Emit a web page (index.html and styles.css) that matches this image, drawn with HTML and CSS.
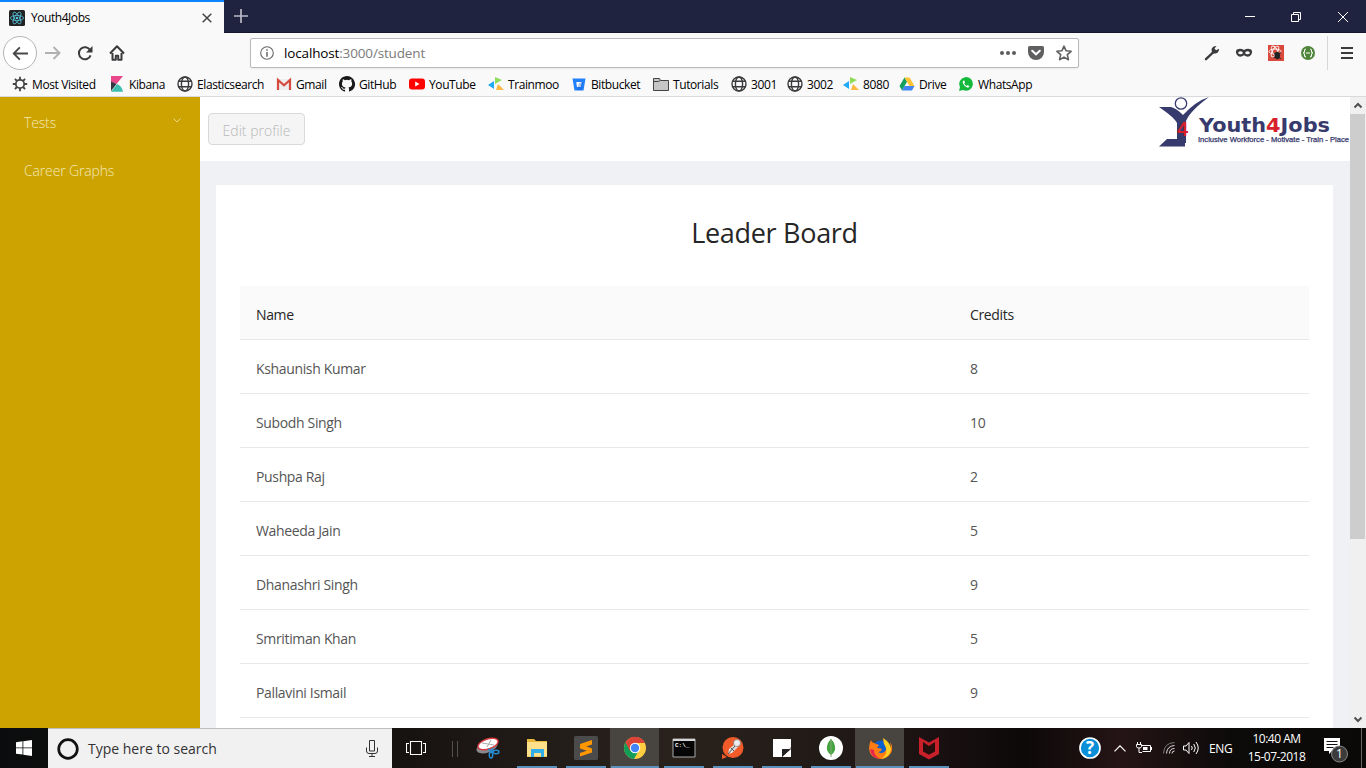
FILE: index.html
```html
<!DOCTYPE html>
<html lang="en">
<head>
<meta charset="utf-8">
<title>Youth4Jobs</title>
<link rel="stylesheet" href="styles.css">
</head>
<body>
<svg class="defs" aria-hidden="true">
  <symbol id="globe" viewBox="0 0 16 16"><g fill="none" stroke="#3b3b3d" stroke-width="1.4"><circle cx="8" cy="8" r="7"/><ellipse cx="8" cy="8" rx="3.6" ry="7"/><path d="M1.5 5.3h13M1.5 10.7h13"/></g></symbol>
  <symbol id="trainmoo" viewBox="0 0 16 16"><path d="M7 1l7 3-7 4z" fill="#8fdc5a"/><path d="M6 5v8L0 9z" fill="#22aaf5"/><path d="M8 14l2-6 6 6z" fill="#fdb942"/></symbol>
</svg>

<header class="browser">
  <div class="tabbar">
    <div class="tab">
      <svg class="i16" viewBox="0 0 16 16"><rect width="16" height="16" rx="1.5" fill="#222"/><g fill="none" stroke="#58c4dc" stroke-width=".8"><ellipse cx="8" cy="8" rx="6.6" ry="2.6"/><ellipse cx="8" cy="8" rx="6.6" ry="2.6" transform="rotate(60 8 8)"/><ellipse cx="8" cy="8" rx="6.6" ry="2.6" transform="rotate(120 8 8)"/></g><circle cx="8" cy="8" r="1.3" fill="#58c4dc"/></svg>
      <span class="tab-title">Youth4Jobs</span>
      <svg class="tab-close" viewBox="0 0 10 10"><path d="M.7.7l8.6 8.6M9.3.7L.7 9.3" stroke="#444" stroke-width="1.5"/></svg>
    </div>
    <svg class="newtab" viewBox="0 0 14 14"><path d="M7 0v14M0 7h14" stroke="#b9bac5" stroke-width="1.7"/></svg>
    <div class="winbtns">
      <svg viewBox="0 0 46 33"><path d="M17 16.5h10" stroke="#fff"/></svg>
      <svg viewBox="0 0 46 33"><path d="M17.5 14.500h7v7h-7zM19.500 14.500v-2h7v7h-2" fill="none" stroke="#fff"/></svg>
      <svg viewBox="0 0 46 33"><path d="M18 12l10 10M28 12L18 22" stroke="#fff"/></svg>
    </div>
  </div>

  <div class="navbar">
    <div class="back"><svg viewBox="0 0 18 16"><path d="M17 8H2M8.300 1.500L1.800 8l6.500 6.500" fill="none" stroke="#48484a" stroke-width="2"/></svg></div>
    <svg class="forward" viewBox="0 0 16 14"><path d="M0 7h14M8.500 1l6 6-6 6" fill="none" stroke="#b1b1b3" stroke-width="1.9"/></svg>
    <svg class="reload" viewBox="0 0 16 16"><path d="M13.600 10.300a6 6 0 1 1-.4-5" fill="none" stroke="#3b3b3d" stroke-width="2"/><path d="M15.500 1v6.500H9z" fill="#3b3b3d"/></svg>
    <svg class="home" viewBox="0 0 16 16"><path d="M1 8.500L8 1.300l7 7.200M3.500 8v6.800h3.300v-4h2.400v4h3.300V8" fill="none" stroke="#3b3b3d" stroke-width="2" stroke-linejoin="round"/></svg>
    <div class="urlbar">
      <svg class="info" viewBox="0 0 14 14"><circle cx="7" cy="7" r="6.300" fill="none" stroke="#666" stroke-width="1.100"/><path d="M7 6v4.700M7 3.200v1.600" stroke="#666" stroke-width="1.500"/></svg>
      <span class="url">localhost<i>:3000/student</i></span>
      <svg class="dots" viewBox="0 0 16 4"><g fill="#5c5c5e"><circle cx="2" cy="2" r="2"/><circle cx="8" cy="2" r="2"/><circle cx="14" cy="2" r="2"/></g></svg>
      <svg class="pocket" viewBox="0 0 16 14"><path d="M1.500 0h13Q16 0 16 1.500V6A8 8 0 0 1 0 6V1.500Q0 0 1.500 0z" fill="#606062"/><path d="M4.200 4.800L8 8.300l3.800-3.500" fill="none" stroke="#fff" stroke-width="2" stroke-linecap="round"/></svg>
      <svg class="star" viewBox="0 0 16 16"><path d="M8 1.200l2.100 4.600 5 .5-3.800 3.400 1.100 5L8 12.100l-4.400 2.600 1.100-5L.9 6.300l5-.5z" fill="none" stroke="#606062" stroke-width="1.600" stroke-linejoin="round"/></svg>
    </div>
    <div class="addons">
      <svg viewBox="0 0 16 16"><path d="M2 14.200L9 7.500" stroke="#3b3b3d" stroke-width="2.400" stroke-linecap="round"/><path d="M8 8.500L7.500 4Q9 .8 12.500 1L10.500 3.500l1.500 1.800L15 3.800Q15 8 11.500 8.500z" fill="#3b3b3d"/></svg>
      <svg viewBox="0 0 16 16"><path d="M1 4.500Q4.500 3 8 5q3.500-2 7-.5Q17 6 15.300 9.500 12.500 13.500 8 10.300 3.500 13.500.7 9.500-1 6 1 4.500z" fill="#3b3b3d"/><ellipse cx="4.500" cy="7.800" rx="2.300" ry="1.500" fill="#f9f9fa"/><ellipse cx="11.500" cy="7.800" rx="2.300" ry="1.500" fill="#f9f9fa"/></svg>
      <svg viewBox="0 0 16 16"><rect width="16" height="16" fill="#d94a3d"/><g fill="none" stroke="#fff" stroke-width=".9"><ellipse cx="7" cy="6.500" rx="6" ry="2.500"/><ellipse cx="7" cy="6.500" rx="6" ry="2.500" transform="rotate(60 7 6.500)"/><ellipse cx="7" cy="6.500" rx="6" ry="2.500" transform="rotate(120 7 6.500)"/></g><ellipse cx="9.300" cy="10.500" rx="2.800" ry="3.700" fill="#222"/><path d="M5.500 8l7.500 6M5.500 13L13 7.500" stroke="#222"/></svg>
      <svg viewBox="0 0 16 16"><circle cx="8" cy="8" r="7" fill="#4e8539"/><path d="M6 4Q4.500 4 4.500 6T3 8q1.500 0 1.500 2T6 12M10 4q1.500 0 1.500 2T13 8q-1.500 0-1.500 2T10 12M6 8h4" fill="none" stroke="#fff" stroke-width="1.100"/></svg>
    </div>
    <div class="menu"><svg viewBox="0 0 12 12"><path d="M0 1h12M0 6h12M0 11h12" stroke="#3b3b3d" stroke-width="2"/></svg></div>
  </div>

  <nav class="bookmarks">
    <a><svg viewBox="0 0 16 16"><circle cx="8" cy="8" r="4.200" fill="none" stroke="#444" stroke-width="1.800"/><path d="M8 .8v3M8 12.200v3M.8 8h3M12.200 8h3M2.900 2.900L5 5M11 11l2.100 2.100M2.900 13.100L5 11M11 5l2.100-2.100" stroke="#444" stroke-width="1.800"/></svg>Most Visited</a>
    <a><svg viewBox="0 0 16 16"><path d="M2 0h12L7.500 8 2 6z" fill="#e8478b"/><path d="M2 5.500L7.500 8 2 15z" fill="#343741"/><path d="M2 15.700L8 8q5 2 6 7.700z" fill="#3ebeb0"/></svg>Kibana</a>
    <a><svg><use href="#globe"/></svg>Elasticsearch</a>
    <a><svg viewBox="0 0 16 16"><path d="M1 3h14v11H1z" fill="#eee"/><path d="M2 14V4l6 5.300L14 4v10" fill="none" stroke="#d54c3f" stroke-width="2.200"/></svg>Gmail</a>
    <a><svg viewBox="0 0 16 16"><path fill="#191717" d="M8 0C3.580 0 0 3.580 0 8c0 3.540 2.290 6.530 5.470 7.590.4.070.55-.17.55-.38v-1.490c-2.010.37-2.530-.49-2.690-.94-.09-.23-.48-.94-.82-1.130-.28-.15-.68-.52-.01-.53.63-.01 1.080.58 1.230.82.72 1.210 1.870.87 2.330.66.07-.52.28-.87.51-1.070-1.780-.2-3.640-.89-3.640-3.950 0-.87.31-1.590.82-2.150-.08-.2-.36-1.020.08-2.120 0 0 .67-.21 2.200.82a7.500 7.500 0 0 1 4 0c1.530-1.040 2.200-.82 2.200-.82.44 1.100.16 1.920.08 2.120.51.56.82 1.270.82 2.150 0 3.070-1.870 3.750-3.650 3.950.29.25.54.73.54 1.480v2.200c0 .21.150.46.55.38A8 8 0 0 0 8 0z"/></svg>GitHub</a>
    <a><svg viewBox="0 0 16 16"><rect y="2.500" width="16" height="11" rx="3" fill="#f00"/><path d="M6.200 5.500v5l4.300-2.500z" fill="#fff"/></svg>YouTube</a>
    <a><svg><use href="#trainmoo"/></svg>Trainmoo</a>
    <a><svg viewBox="0 0 16 16"><path d="M1.500 2.500h13l-2 12h-9z" fill="#2380fb"/><path d="M5.300 6h5.400l-.8 5H6z" fill="#fff"/><path d="M8 7l4-1-1.500 8H6z" fill="#1159c9" opacity=".35"/></svg>Bitbucket</a>
    <a><svg viewBox="0 0 16 16"><path d="M.5 14.500v-12h6l1 2h8v10z" fill="#c6c6c6" stroke="#444"/><path d="M.5 5.500h5l1.500-1" fill="none" stroke="#444"/></svg>Tutorials</a>
    <a><svg><use href="#globe"/></svg>3001</a>
    <a><svg><use href="#globe"/></svg>3002</a>
    <a><svg><use href="#trainmoo"/></svg>8080</a>
    <a><svg viewBox="0 0 16 16"><path d="M5.500 1.500L.5 10l2.500 4.500 5-8.700z" fill="#11a05d"/><path d="M5.500 1.500h5l5 8.500h-5z" fill="#fbc334"/><path d="M5.500 10h10L13 14.500H3z" fill="#4285f4"/></svg>Drive</a>
    <a><svg viewBox="0 0 16 16"><path d="M1 15l1-4A6.800 6.800 0 1 1 5 14z" fill="#12b93b"/><path d="M5.500 4.500Q4 5.500 5 7.500q1.500 3 4 4 2 .5 2.500-1.300L9.700 9l-1 1Q7 9.200 6.200 7.500l.8-1-.7-2z" fill="#fff"/></svg>WhatsApp</a>
  </nav>
</header>

<div class="viewport">
  <aside class="sidebar">
    <div class="side-item">Tests<svg viewBox="0 0 8 5"><path d="M.5.500L4 4l3.500-3.500" fill="none" stroke="#ecd98d"/></svg></div>
    <div class="side-item">Career Graphs</div>
  </aside>
  <main class="main">
    <div class="topbar">
      <button class="edit" disabled>Edit profile</button>
      <svg class="logo" viewBox="0 0 191 51">
        <path d="M0 10h12q5 1 12 8Q37 4 50 0 31 14 27 24v22H26v3.500H0L8 42h10V26Q16 21 0 10z" fill="#373a6d"/>
        <circle cx="22" cy="6.500" r="5.700" fill="#fff" stroke="#373a6d" stroke-width="1.300"/>
        <text class="logo-four" x="18" y="39">4</text>
        <text class="logo-name" x="40" y="35" textLength="131" lengthAdjust="spacingAndGlyphs">Youth<tspan fill="#d7202c">4</tspan>Jobs</text>
        <text class="logo-tag" x="39" y="45" textLength="151" lengthAdjust="spacingAndGlyphs">Inclusive Workforce - Motivate - Train - Place</text>
      </svg>
    </div>
    <section class="card">
      <h1>Leader Board</h1>
      <table>
        <thead><tr><th>Name</th><th>Credits</th></tr></thead>
        <tbody>
          <tr><td>Kshaunish Kumar</td><td>8</td></tr>
          <tr><td>Subodh Singh</td><td>10</td></tr>
          <tr><td>Pushpa Raj</td><td>2</td></tr>
          <tr><td>Waheeda Jain</td><td>5</td></tr>
          <tr><td>Dhanashri Singh</td><td>9</td></tr>
          <tr><td>Smritiman Khan</td><td>5</td></tr>
          <tr><td>Pallavini Ismail</td><td>9</td></tr>
        </tbody>
      </table>
    </section>
  </main>
  <div class="scrollbar">
    <svg viewBox="0 0 16 17"><path d="M4.500 10.500L8 7l3.500 3.500" fill="none" stroke="#505050" stroke-width="2"/></svg>
    <div class="thumb"></div>
    <svg class="down" viewBox="0 0 16 17"><path d="M4.500 6.500L8 10l3.500-3.500" fill="none" stroke="#505050" stroke-width="2"/></svg>
  </div>
</div>

<footer class="taskbar">
  <div class="start"><svg viewBox="0 0 16 16"><path d="M0 2.200l6.500-.9v6.200H0zM7.300 1.200L16 0v7.500H7.300zM0 8.300h6.500v6.200L0 13.700zM7.300 8.300H16V16l-8.700-1.200z" fill="#fff"/></svg></div>
  <div class="search">
    <svg class="cortana" viewBox="0 0 22 22"><circle cx="11" cy="11" r="9.300" fill="none" stroke="#111" stroke-width="2.700"/></svg>
    <span>Type here to search</span>
    <svg class="mic" viewBox="0 0 12 17"><path d="M3.500.5h5v10.500h-5zM.5 7.500V11q0 2.500 2.500 2.500h6q2.500 0 2.500-2.500V7.500M6 13.500v3M3 16.500h6" fill="none" stroke="#333"/></svg>
  </div>
  <div class="taskview"><svg viewBox="0 0 20 14"><path d="M4.500.5h11v13h-11zM3 2.500H.5v9H3M17 2.500h2.500v9H17" fill="none" stroke="#fff" stroke-width="1.100"/></svg></div>
  <div class="apps">
    <div class="app"><svg viewBox="0 0 24 24"><ellipse cx="11" cy="11" rx="11" ry="5.500" transform="rotate(-20 11 11)" fill="#87898c"/><ellipse cx="12" cy="8" rx="10.500" ry="5" transform="rotate(-18 12 8)" fill="#fff" stroke="#d73a3f" stroke-width="1.400"/><path d="M6 7l12 2M11 11l4-7" stroke="#aaa"/><path d="M12 13l6 3M17 12l-3 5" stroke="#268bd0" stroke-width="1.500"/><g fill="none" stroke="#268bd0" stroke-width="1.500"><ellipse cx="15" cy="19" rx="1.700" ry="3"/><ellipse cx="20" cy="16" rx="3" ry="1.700"/></g></svg></div>
    <div class="app run"><svg viewBox="0 0 24 24"><path d="M2 3h7l2 2h11v16H2z" fill="#e8b83c"/><path d="M2 6h20v14.500H2z" fill="#ffe08a"/><path d="M6 21v-8h13v8h-3v-4H9v4z" fill="#31ade9"/></svg></div>
    <div class="app run"><svg viewBox="0 0 24 24"><rect width="24" height="24" rx="1.500" fill="#4b4b4b"/><path d="M6 8l12-4v4.500L6 12.500zM6 8l12 4.500v4L6 12.500zM6 17l12-4v3.500L6 20.500z" fill="#ff9800"/></svg></div>
    <div class="app run active"><svg viewBox="0 0 24 24"><circle cx="12" cy="12" r="11" fill="#ffcd40"/><path d="M12 12L2.500 6.500A11 11 0 0 0 11 23l5-9z" fill="#0f9d58"/><path d="M2.500 6.500A11 11 0 0 1 22 7H12l-5 8z" fill="#db4437"/><circle cx="12" cy="12" r="5.200" fill="#fff"/><circle cx="12" cy="12" r="4.200" fill="#4285f4"/></svg></div>
    <div class="app run"><svg viewBox="0 0 24 24"><path d="M1 3h22v18H1z" fill="#050505" stroke="#aaa"/><path d="M1 3h22v2H1z" fill="#d5d5d5"/><text class="cmd" x="3" y="11">C:\_</text></svg></div>
    <div class="app run"><svg viewBox="0 0 24 24"><circle cx="12" cy="11.500" r="10.500" fill="#f15a29"/><path d="M1 18l5 3-5 2z" fill="#f15a29"/><path d="M7 18l1-5 6-5 3 3-6 6z" fill="#ddd"/><circle cx="16" cy="7" r="3.500" fill="#eee" stroke="#777" stroke-width=".7"/><path d="M7 18L14 10M10 12l3 3" stroke="#555"/></svg></div>
    <div class="app run"><svg viewBox="0 0 24 24"><path d="M3 3h18v8l-7 10H3z" fill="#fff"/><path d="M12 21v-8h9z" fill="#111"/><path d="M21 12v9h-9z" fill="#fff"/><path d="M12 21v-8h9z" fill="#222"/></svg></div>
    <div class="app run"><svg viewBox="0 0 24 24"><circle cx="12" cy="12" r="12" fill="#fff"/><path d="M12 3q-5 5-4 11 1 3 4 5 3-2 4-5 1-6-4-11z" fill="#45a340"/><path d="M12 3v18" stroke="#83a973"/></svg></div>
    <div class="app run active"><svg viewBox="0 0 24 24"><circle cx="13" cy="13" r="8.500" fill="#0a5fd0"/><path d="M3 4q1 3 3 3l5 2-2 3q3 0 5 1-1 3-4 3 5 3 8-2 1-5-3-8 8 2 6 9 3-2 1-9 4 5 1 11-4 6-11 6Q2 22 1 13 1 8 3 4z" fill="#ff7b13"/><path d="M15 2q8 5 8 12-2 8-10 9 9-6 3-15z" fill="#ffce21"/><path d="M2 13q1 9 10 10-6-3-6-9z" fill="#e7234f"/></svg></div>
    <div class="app run"><svg viewBox="0 0 24 24"><path d="M2 1l10 5.500L22 1v17l-10 5.500L2 18z" fill="#c8202a"/><path d="M6 6l6 4 6-4v9.500l-6 3.300-6-3.300z" fill="#260e0c"/></svg></div>
  </div>
  <div class="tray">
    <svg class="help" viewBox="0 0 22 22"><circle cx="11" cy="11" r="10" fill="#0a8fd8" stroke="#fff" stroke-width="1.700"/><text class="q" x="11" y="17">?</text></svg>
    <svg class="up" viewBox="0 0 12 7"><path d="M.5 6.300L6 .8l5.500 5.500" fill="none" stroke="#fff" stroke-width="1.200"/></svg>
    <svg class="battery" viewBox="0 0 16 12"><path d="M5 3.500h9.500v6h-8M15.500 5v3M1.500 0v2.500M4.500 0v2.500M.5 2.500h5v2q0 1.500-2.500 1.500T.5 4.500zM3 6v4.500h3" fill="none" stroke="#fff"/><path d="M7 5h4.500v3H7z" fill="#fff"/></svg>
    <svg class="wifi" viewBox="0 0 12 12"><g fill="none"><path d="M.5 11.500Q1 1 11.500.5" stroke="#777"/><path d="M3.500 11.500Q4 4 11.500 3.500M6.500 11.500q0-5 5-5M9 11.500q0-2.500 2.500-2.500" stroke="#ddd"/></g></svg>
    <svg class="sound" viewBox="0 0 16 14"><path d="M.5 5h2.500l3-3.500v11L3 9H.5zM8.500 5q1.500 2 0 4M10.800 3q3 4 0 8M13 1q4.500 6 0 12" fill="none" stroke="#fff"/></svg>
    <span class="lang">ENG</span>
    <div class="clock"><span class="time">10:40 AM</span><span class="date">15-07-2018</span></div>
    <svg class="notify" viewBox="0 0 24 26"><path d="M0 0h16v13h-8l-3 3v-3H0z" fill="#fff"/><path d="M2.500 3.500h11M2.500 6.500h11M2.500 9.500h7" stroke="#111"/><circle cx="15.500" cy="16" r="8" fill="#3b3b3b" stroke="#888"/><text class="count" x="15.500" y="20">1</text></svg>
    <div class="peek"></div>
  </div>
</footer>
</body>
</html>
```

FILE: styles.css
```css
* { box-sizing: border-box; }
body { margin: 0; width: 1366px; height: 768px; overflow: hidden; display: flex; flex-direction: column; font-family: "Open Sans", "Noto Sans", sans-serif; font-size: 12px; color: #000; }
svg { display: block; flex: none; }
.defs { display: none; }
.browser { height: 97px; flex: none; background: #f9f9fa; border-bottom: 1px solid #dadadc; }
.tabbar { height: 33px; background: #202340; display: flex; border-bottom: 1px solid #14162d; }
.tab { width: 224px; height: 33px; background: #f9f9fa; border-top: 2px solid #0a84ff; display: flex; align-items: center; padding: 0 12px 0 9px; }
.i16 { width: 16px; height: 16px; }
.tab-title { margin-left: 6px; flex: 1; letter-spacing: -.45px; }
.tab-close { width: 10px; height: 10px; }
.newtab { width: 14px; height: 14px; margin: 9px 0 0 10px; }
.winbtns { margin-left: auto; display: flex; }
.winbtns svg { width: 46px; height: 33px; }
.navbar { height: 40px; display: flex; align-items: center; padding-left: 3px; }
.back { width: 34px; height: 34px; border: 1px solid #b5b5b7; border-radius: 50%; background: #fff; display: flex; align-items: center; justify-content: center; }
.back svg { width: 17px; height: 15px; }
.forward { width: 16px; height: 14px; margin-left: 8px; }
.reload { width: 16px; height: 16px; margin-left: 16px; }
.home { width: 16px; height: 16px; margin-left: 16px; }
.urlbar { width: 829px; height: 30px; margin-left: 125px; background: #fff; border: 1px solid #b9b9bb; border-radius: 2px; display: flex; align-items: center; padding: 0 6px 0 9px; box-shadow: 0 1px 2px #0001; }
.info { width: 14px; height: 14px; }
.url { flex: 1; margin-left: 10px; font-size: 13.500px; letter-spacing: -.15px; }
.url i { font-style: normal; color: #7b7b7b; }
.dots { width: 16px; height: 4px; }
.pocket { width: 16px; height: 14px; margin-left: 12px; }
.star { width: 16px; height: 16px; margin-left: 12px; }
.addons { display: flex; gap: 16px; margin-left: 125px; }
.addons svg { width: 16px; height: 16px; }
.menu { margin-left: auto; width: 39px; height: 34px; border-left: 1px solid #d7d7db; display: flex; align-items: center; padding-left: 13px; }
.menu svg { width: 12px; height: 12px; }
.bookmarks { height: 22px; padding-left: 12px; display: grid; grid-template-columns: 97px 68px 99px 63px 70px 79px 83px 82px 78px 56px 56px 56px 59px 90px; }
.bookmarks a { display: flex; align-items: center; gap: 4px; white-space: nowrap; letter-spacing: -.4px; }
.bookmarks svg { width: 16px; height: 16px; }
.viewport { height: 631px; flex: none; display: flex; overflow: hidden; }
.sidebar { width: 200px; background: #cca300; padding-top: 1px; }
.side-item { height: 48px; padding: 0 19px 0 24px; display: flex; align-items: center; justify-content: space-between; font-size: 14px; font-weight: 300; letter-spacing: -.15px; color: #f5e9b9; }
.side-item svg { width: 8px; height: 5px; margin-top: -3px; }
.main { width: 1150px; background: #f0f1f5; overflow: hidden; }
.topbar { height: 64px; background: #fff; display: flex; justify-content: space-between; padding-left: 8px; }
.edit { width: 97px; height: 32px; margin-top: 16px; border: 1px solid #d9d9d9; border-radius: 4px; background: #f5f5f5; color: #b8b8b8; font: 300 14px "Open Sans", sans-serif; padding: 2px 0 0; }
.logo { width: 191px; height: 51px; }
.logo-name { font: bold 19px "DejaVu Sans", sans-serif; fill: #373a6d; }
.logo-tag { font: 7px "Liberation Sans", sans-serif; fill: #373a6d; stroke: #373a6d; stroke-width: .25px; }
.logo-four { font: bold 20px "Liberation Sans", sans-serif; fill: #d7202c; }
.card { margin: 24px 17px 0 16px; padding: 24px; height: 700px; background: #fff; }
h1 { margin: 0; height: 77px; font-size: 27px; font-weight: 400; line-height: 47px; text-align: center; color: #262626; letter-spacing: -.3px; }
table { width: 1069px; border-collapse: separate; border-spacing: 0; table-layout: fixed; font-size: 14px; }
th, td { height: 54px; padding: 3px 16px 0; text-align: left; font-weight: 400; border-bottom: 1px solid #e8e8e8; letter-spacing: -.35px; }
th { background: #fafafa; color: #262626; }
td { color: #555; }
th:first-child { width: 714px; }
.scrollbar { width: 16px; background: #f0f0f0; display: flex; flex-direction: column; }
.scrollbar svg { width: 16px; height: 17px; }
.thumb { height: 425px; margin: 0 1px 0 0; background: #cdcdcd; }
.down { margin-top: auto; }
.taskbar { height: 40px; flex: none; display: flex; background: linear-gradient(90deg, #0b0c0d 0, #171311 30%, #241e1a 42%, #29221c 50%, #211b18 60%, #1b1112 68%, #0c0908 75%, #251416 82%, #0d0b0a 90%, #0b0908 100%); }
.start { width: 48px; display: grid; place-items: center; }
.start svg { width: 16px; height: 16px; }
.search { width: 344px; background: #f1f1f1; border-top: 1px solid #bdbdbd; display: flex; align-items: center; padding: 0 14px 0 9px; }
.search span { flex: 1; margin-left: 9px; font-size: 14px; color: #333; }
.cortana { width: 22px; height: 22px; }
.mic { width: 12px; height: 17px; }
.taskview { width: 71px; padding: 13px 0 0 14px; display: flex; gap: 30px; }
.taskview svg { width: 20px; height: 14px; }
.taskview::after { content: ""; width: 4px; height: 16px; border: solid #50504f; border-width: 0 1px; margin-left: -4px; flex: none; }
.apps { display: flex; }
.app { width: 49px; height: 40px; padding: 0 4.500px; display: flex; flex-direction: column; align-items: center; justify-content: space-between; }
.app svg { width: 24px; height: 24px; margin-top: 8px; }
.run::after { content: ""; width: 40px; height: 2px; background: #5a91bd; }
.active { background: #484541; }
.active::after { width: 48px; }
.cmd { font: bold 6px "Liberation Mono", monospace; fill: #fff; }
.tray { margin-left: auto; display: flex; align-items: center; color: #fff; }
.help { width: 22px; height: 22px; margin-right: 13px; }
.q { font: bold 17px "Open Sans", sans-serif; fill: #fff; text-anchor: middle; }
.up { width: 12px; height: 7px; margin-right: 10px; }
.battery { width: 16px; height: 12px; margin-right: 11px; }
.wifi { width: 12px; height: 12px; margin-right: 8px; }
.sound { width: 16px; height: 14px; margin-right: 10px; }
.lang { width: 30px; letter-spacing: -.3px; }
.clock { width: 69px; margin-left: 3px; display: flex; flex-direction: column; align-items: center; line-height: 18px; letter-spacing: -.5px; white-space: nowrap; }
.notify { width: 24px; height: 26px; margin: 6px 0 0 13px; }
.count { font: 12px "Open Sans", sans-serif; fill: #fff; text-anchor: middle; }
.peek { width: 5px; height: 40px; border-left: 1px solid #666; margin-left: 13px; }
```
